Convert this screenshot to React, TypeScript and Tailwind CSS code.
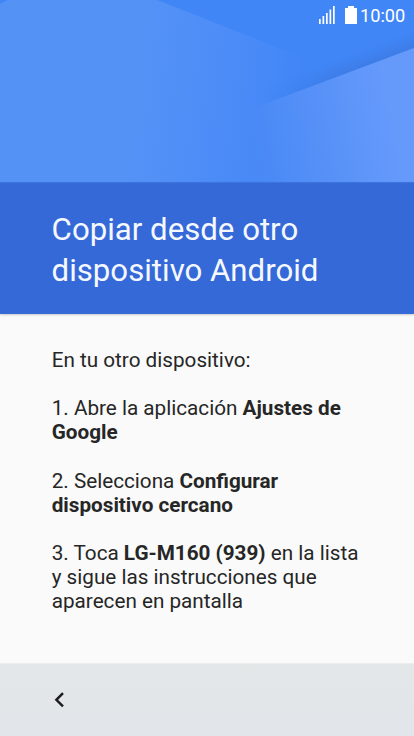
import React from 'react';

const SignalIcon = () => (
  <svg width="17" height="18" viewBox="0 0 17 18" fill="white">
    <rect x="0" y="13" width="1.7" height="5" />
    <rect x="3.5" y="10" width="1.7" height="8" />
    <rect x="7" y="7" width="1.7" height="11" />
    <rect x="10.5" y="3.5" width="1.7" height="14.5" />
    <rect x="14" y="0" width="1.7" height="18" />
  </svg>
);

const BatteryIcon = () => (
  <svg width="12" height="18" viewBox="0 0 12 18" fill="white">
    <path d="M3 0h6v2h3v16H0V2h3z" />
  </svg>
);

const HeaderArt = () => (
  <svg className="block" width="414" height="182" viewBox="0 0 414 182">
    <defs>
      <linearGradient id="left" gradientUnits="userSpaceOnUse" x1="140" y1="70" x2="300" y2="88">
        <stop offset="0" stopColor="#5492f6" />
        <stop offset="0.45" stopColor="#4e8df7" />
        <stop offset="1" stopColor="#4186f7" />
      </linearGradient>
      <linearGradient id="right" gradientUnits="userSpaceOnUse" x1="230" y1="125" x2="388" y2="95">
        <stop offset="0" stopColor="#4a8af6" stopOpacity="0" />
        <stop offset="0.2" stopColor="#4b8af6" />
        <stop offset="0.65" stopColor="#5a93f8" />
        <stop offset="1" stopColor="#659afb" />
      </linearGradient>
      <linearGradient id="shade" gradientUnits="userSpaceOnUse" x1="350" y1="73" x2="344" y2="57">
        <stop offset="0" stopColor="#3d7ce6" />
        <stop offset="1" stopColor="#3d7ce6" stopOpacity="0" />
      </linearGradient>
      <linearGradient id="shadeFade" gradientUnits="userSpaceOnUse" x1="265" y1="0" x2="340" y2="0">
        <stop offset="0" stopColor="black" />
        <stop offset="1" stopColor="white" />
      </linearGradient>
      <mask id="shadeMask" maskUnits="userSpaceOnUse" x="0" y="0" width="414" height="182">
        <rect width="414" height="182" fill="url(#shadeFade)" />
      </mask>
    </defs>
    <rect width="414" height="182" fill="#4186f7" />
    <path d="M0 4 8 0h149l157 62v120H0z" fill="url(#left)" />
    <path d="M250 109V89L414 20v28z" fill="url(#shade)" mask="url(#shadeMask)" />
    <path d="M235 115 414 48v134H225z" fill="url(#right)" />
  </svg>
);

const App = () => {
  return (
    <div className="flex h-[736px] w-[414px] flex-col overflow-hidden bg-[#fafafa] font-[Roboto,sans-serif]">
      <div className="relative h-[182px] shrink-0">
        <HeaderArt />
        {/* Status bar over the artwork */}
        <div className="absolute top-[6px] right-[8px] flex h-[18px] items-center text-white">
          <SignalIcon />
          <div className="ml-[9px]">
            <BatteryIcon />
          </div>
          <span className="ml-[3px] w-[46px] pt-[2px] text-[18.2px] leading-[18px] whitespace-nowrap">10:00</span>
        </div>
      </div>

      <header className="z-10 h-[132px] shrink-0 border-t border-[#3d75df] bg-[#3569d8] pt-[27px] pl-[51.6px] shadow-[0_1px_2px_rgba(0,0,0,0.2)]">
        <h1 className="text-[31.2px] leading-[40.5px] text-[#f5f9ff]">
          Copiar desde otro
          <br />
          dispositivo Android
        </h1>
      </header>

      <main className="flex grow flex-col gap-[24.1px] pt-[34px] pl-[51.7px] text-[20.7px] leading-[24.15px] text-[#262626]">
        <p>En tu otro dispositivo:</p>
        <p>
          1. Abre la aplicación <b>Ajustes de<br />Google</b>
        </p>
        <p>
          2. Selecciona <b>Configurar<br />dispositivo cercano</b>
        </p>
        <p>
          3. Toca <b>LG-M160 (939)</b> en la lista
          <br />
          y sigue las instrucciones que
          <br />
          aparecen en pantalla
        </p>
      </main>

      <footer className="flex h-[73px] shrink-0 items-center border-t border-[#eceeee] bg-linear-to-b from-[#e3e7e8] to-[#e2e6eb] pl-[54px]">
        <svg width="11" height="16" viewBox="0 0 11 16" fill="none" stroke="#1c1d1f" strokeWidth="2.5">
          <path d="M9 1.2 2.4 7.8 9 14.4" />
        </svg>
      </footer>
    </div>
  );
};

export default App;
